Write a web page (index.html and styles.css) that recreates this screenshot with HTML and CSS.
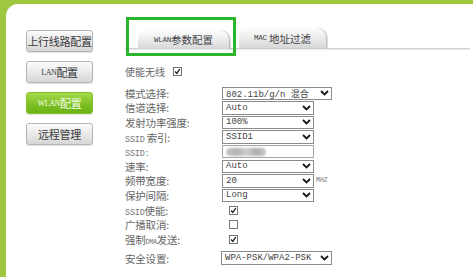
FILE: index.html
```html
<!DOCTYPE html>
<html>
<head>
<meta charset="utf-8">
<link rel="stylesheet" href="styles.css">
</head>
<body>
<div class="frame">
  <div class="panel">
    <nav class="side">
      <div class="btn">上行线路配置</div>
      <div class="btn"><span class="blat">LAN</span>配置</div>
      <div class="btn active"><span class="blat">WLAN</span>配置</div>
      <div class="btn">远程管理</div>
    </nav>
    <main class="main">
      <div class="tabs">
        <div class="tab tab1"><span class="tlat">WLAN</span>参数配置</div>
        <div class="tab tab2"><span class="tlat">MAC</span>&nbsp;地址过滤</div>
        <div class="hl"></div>
      </div>
      <div class="enable">使能无线<span class="cb on"><svg viewBox="0 0 9 9"><polyline points="1.5,4.5 3.5,7 7.5,1.5"/></svg></span></div>
      <div class="form">
        <div class="row"><span class="lbl">模式选择:</span><div class="sel wide"><span>802.11b/g/n 混合</span><svg class="chev" viewBox="0 0 9 6"><polyline points="1,1 4.5,4.5 8,1"/></svg></div></div>
        <div class="row"><span class="lbl">信道选择:</span><div class="sel"><span>Auto</span><svg class="chev" viewBox="0 0 9 6"><polyline points="1,1 4.5,4.5 8,1"/></svg></div></div>
        <div class="row"><span class="lbl">发射功率强度:</span><div class="sel"><span>100%</span><svg class="chev" viewBox="0 0 9 6"><polyline points="1,1 4.5,4.5 8,1"/></svg></div></div>
        <div class="row"><span class="lbl"><span class="lat">SSID</span> 索引:</span><div class="sel"><span>SSID1</span><svg class="chev" viewBox="0 0 9 6"><polyline points="1,1 4.5,4.5 8,1"/></svg></div></div>
        <div class="row"><span class="lbl"><span class="lat">SSID:</span></span><div class="inp"><span class="blur"></span></div></div>
        <div class="row"><span class="lbl">速率:</span><div class="sel"><span>Auto</span><svg class="chev" viewBox="0 0 9 6"><polyline points="1,1 4.5,4.5 8,1"/></svg></div></div>
        <div class="row"><span class="lbl">频带宽度:</span><div class="sel"><span>20</span><svg class="chev" viewBox="0 0 9 6"><polyline points="1,1 4.5,4.5 8,1"/></svg></div><span class="unit">MHZ</span></div>
        <div class="row"><span class="lbl">保护间隔:</span><div class="sel"><span>Long</span><svg class="chev" viewBox="0 0 9 6"><polyline points="1,1 4.5,4.5 8,1"/></svg></div></div>
        <div class="row"><span class="lbl"><span class="lat">SSID</span>使能:</span><span class="cb on boxed"><svg viewBox="0 0 9 9"><polyline points="1.5,4.5 3.5,7 7.5,1.5"/></svg></span></div>
        <div class="row"><span class="lbl">广播取消:</span><span class="cb boxed"></span></div>
        <div class="row"><span class="lbl">强制<span class="lat sm">DMA</span>发送:</span><span class="cb on boxed"><svg viewBox="0 0 9 9"><polyline points="1.5,4.5 3.5,7 7.5,1.5"/></svg></span></div>
        <div class="row sec"><span class="lbl">安全设置:</span><div class="sel sw"><span>WPA-PSK/WPA2-PSK</span><svg class="chev" viewBox="0 0 9 6"><polyline points="1,1 4.5,4.5 8,1"/></svg></div></div>
      </div>
    </main>
  </div>
</div>
</body>
</html>
```
FILE: styles.css
```css
html, body {
  margin: 0;
  padding: 0;
  background: #fff;
  font-family: "Noto Sans CJK SC", "DejaVu Sans", sans-serif;
}
.frame {
  background: #9dc83f;
  padding: 4px 0 0 6px;
  height: 277px;
  box-sizing: border-box;
}
.panel {
  background: #fff;
  border-top-left-radius: 12px;
  height: 100%;
  display: flex;
}
.side {
  width: 119px;
  flex: none;
  box-sizing: border-box;
  padding: 26px 0 0 20px;
  display: flex;
  flex-direction: column;
  gap: 9px;
}
.btn {
  width: 67px;
  height: 22px;
  box-sizing: border-box;
  border: 1px solid #b4b4b4;
  border-radius: 3px;
  background: linear-gradient(#fbfbfb, #e6e6e6 60%, #d6d6d6);
  box-shadow: 0 1px 1px rgba(0,0,0,0.12);
  display: flex;
  align-items: center;
  justify-content: center;
  font-size: 11px;
  color: #3a3a3a;
  white-space: nowrap;
  letter-spacing: -0.3px;
}
.btn.active {
  background: linear-gradient(#a6d94a, #7cbf22 60%, #6cb318);
  border-color: #84c12e;
  color: #f4ffe8;
}
.blat {
  font-family: "Liberation Serif", serif;
  font-size: 8px;
  letter-spacing: -0.4px;
}
.main {
  flex: 1;
  display: flex;
  flex-direction: column;
}
.tabs {
  position: relative;
  margin-top: 24px;
  height: 20px;
  display: flex;
  align-items: flex-end;
  padding-left: 13px;
  gap: 9px;
  border-bottom: 1px solid #cfcfcf;
  box-shadow: 0 1px 1px #ececec;
  margin-right: 3px;
}
.tab {
  height: 19px;
  box-sizing: border-box;
  background: linear-gradient(#fdfdfd, #ececec 50%, #d6d6d6);
  border-radius: 7px 10px 0 0;
  border-right: 1px solid #bdbdbd;
  box-shadow: 1px 0 1px rgba(0,0,0,0.15);
  display: flex;
  align-items: center;
  justify-content: center;
  font-size: 10.5px;
  color: #444;
  white-space: nowrap;
}
.tab1 { width: 92px; margin-bottom: -1px; }
.tab2 { width: 88px; height: 20px; }
.tlat {
  font-family: "Liberation Mono", monospace;
  font-size: 7.5px;
  letter-spacing: -0.3px;
}
.hl {
  position: absolute;
  left: 1px;
  top: -11px;
  width: 110px;
  height: 39px;
  box-sizing: border-box;
  border: 3px solid #2cb52a;
}
.enable {
  margin-top: 15px;
  height: 14px;
  display: flex;
  align-items: center;
  font-size: 10px;
  color: #666;
}
.enable .cb { margin-left: 8px; }
.cb {
  width: 9px;
  height: 9px;
  box-sizing: border-box;
  border: 1px solid #777;
  background: #fff;
  display: inline-flex;
  flex: none;
}
.cb svg {
  width: 7px;
  height: 7px;
  fill: none;
  stroke: #222;
  stroke-width: 1.7;
}
.cb.boxed { margin-left: 7px; }
.form {
  margin-top: 8px;
  display: flex;
  flex-direction: column;
}
.row {
  height: 14.6px;
  display: flex;
  align-items: center;
}
.row.sec { margin-top: 5px; height: 13px; }
.lbl {
  width: 97px;
  flex: none;
  font-size: 10.5px;
  color: #666;
  white-space: nowrap;
  letter-spacing: -0.2px;
}
.lat {
  font-family: "Liberation Mono", monospace;
  font-size: 8.5px;
  color: #777;
}
.lat.sm { font-size: 7px; letter-spacing: -0.5px; }
.sel, .inp {
  width: 92px;
  height: 13.5px;
  box-sizing: border-box;
  border: 1px solid #8a8a8a;
  background: #fff;
  display: flex;
  align-items: center;
  justify-content: space-between;
  padding: 0 2px 0 3px;
  font-family: "Liberation Mono", "Noto Sans CJK SC", monospace;
  font-size: 9px;
  color: #444;
  white-space: nowrap;
}
.sel.wide { width: 110px; height: 12.5px; }
.sel.sw { width: 111px; margin-left: -1px; }
.inp { border-color: #a5a5a5; }
.chev {
  width: 9px;
  height: 6px;
  fill: none;
  stroke: #1a1a1a;
  stroke-width: 1.8;
  flex: none;
}
.blur {
  width: 40px;
  height: 8px;
  border-radius: 4px;
  background: linear-gradient(90deg, #c4c4c4, #b2b2b2 30%, #cfcfcf 50%, #adadad 75%, #c6c6c6);
  filter: blur(1.2px);
}
.unit {
  margin-left: 2px;
  font-family: "Liberation Mono", monospace;
  font-size: 6.5px;
  color: #777;
}
```
